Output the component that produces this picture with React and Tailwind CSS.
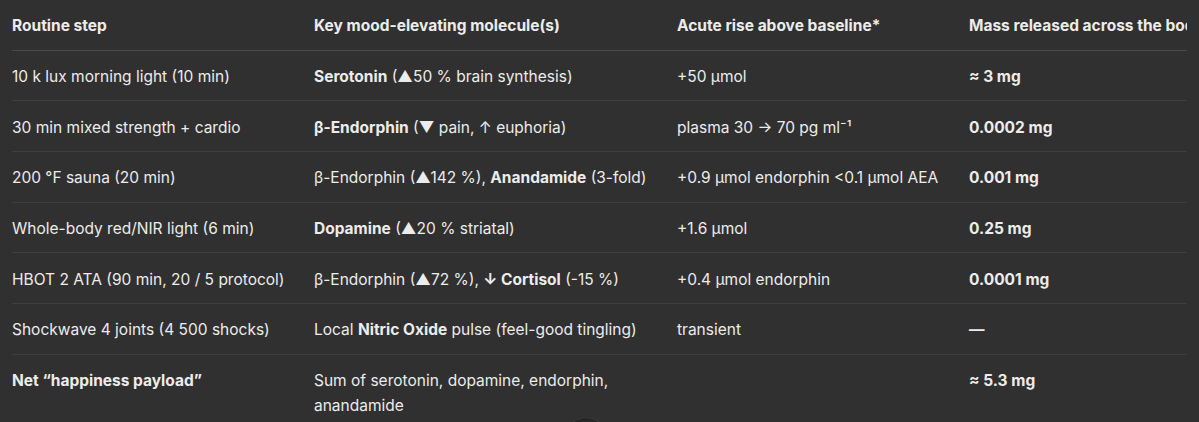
const rows = [
  {
    step: "10 k lux morning light (10 min)",
    molecule: (
      <>
        <b>Serotonin</b> (▲50 % brain synthesis)
      </>
    ),
    rise: "+50 µmol",
    mass: "≈ 3 mg",
  },
  {
    step: "30 min mixed strength + cardio",
    molecule: (
      <>
        <b>β-Endorphin</b> (▼ pain, ↑ euphoria)
      </>
    ),
    rise: "plasma 30 → 70 pg ml⁻¹",
    mass: "0.0002 mg",
  },
  {
    step: "200 °F sauna (20 min)",
    molecule: (
      <>
        β-Endorphin (▲142 %), <b>Anandamide</b> (3-fold)
      </>
    ),
    rise: "+0.9 µmol endorphin <0.1 µmol AEA",
    mass: "0.001 mg",
  },
  {
    step: "Whole-body red/NIR light (6 min)",
    molecule: (
      <>
        <b>Dopamine</b> (▲20 % striatal)
      </>
    ),
    rise: "+1.6 µmol",
    mass: "0.25 mg",
  },
  {
    step: "HBOT 2 ATA (90 min, 20 / 5 protocol)",
    molecule: (
      <>
        β-Endorphin (▲72 %), <b>↓ Cortisol</b> (-15 %)
      </>
    ),
    rise: "+0.4 µmol endorphin",
    mass: "0.0001 mg",
  },
  {
    step: "Shockwave 4 joints (4 500 shocks)",
    molecule: (
      <>
        Local <b>Nitric Oxide</b> pulse (feel-good tingling)
      </>
    ),
    rise: "transient",
    mass: "—",
  },
  {
    step: <b>Net “happiness payload”</b>,
    molecule: "Sum of serotonin, dopamine, endorphin, anandamide",
    rise: "",
    mass: "≈ 5.3 mg",
  },
];

export default function App() {
  return (
    <div
      className="relative h-[422px] overflow-hidden bg-[#303030] text-[#ececec] text-[15.5px] leading-[25px]"
      style={{ fontFamily: 'Inter, "Liberation Sans", "DejaVu Sans", sans-serif' }}
    >
      <div className="ml-3 w-[1175px] overflow-hidden">
        <table className="w-[1260px] table-fixed border-collapse text-left">
          <colgroup>
            <col className="w-[302px]" />
            <col className="w-[363px]" />
            <col className="w-[292px]" />
            <col className="w-[303px]" />
          </colgroup>
          <thead>
            <tr className="border-b border-[#4a4a4a]">
              <th className="pt-[13.33px] pb-[11.33px] pr-4 font-bold">Routine step</th>
              <th className="pt-[13.33px] pb-[11.33px] pr-4 font-bold">Key mood-elevating molecule(s)</th>
              <th className="pt-[13.33px] pb-[11.33px] pr-4 font-bold">Acute rise above baseline*</th>
              <th className="pt-[13.33px] pb-[11.33px] pr-4 font-bold whitespace-nowrap">
                Mass released across the body
              </th>
            </tr>
          </thead>
          <tbody>
            {rows.map((r, i) => (
              <tr
                key={i}
                className={i < rows.length - 1 ? "border-b border-[#3e3e3e]" : ""}
              >
                <td className="pt-[13.33px] pb-[11.33px] pr-4 align-top">{r.step}</td>
                <td className="pt-[13.33px] pb-[11.33px] pr-4 align-top">{r.molecule}</td>
                <td className="pt-[13.33px] pb-[11.33px] pr-4 align-top">{r.rise}</td>
                <td className="pt-[13.33px] pb-[11.33px] pr-4 align-top font-bold whitespace-nowrap">
                  {r.mass}
                </td>
              </tr>
            ))}
          </tbody>
        </table>
      </div>

      {/* scroll-down button peeking at the bottom */}
      <div className="absolute left-[566px] top-[417px] h-10 w-10 rounded-full border border-[#3a3a3a] bg-[#262626]" />
    </div>
  );
}
